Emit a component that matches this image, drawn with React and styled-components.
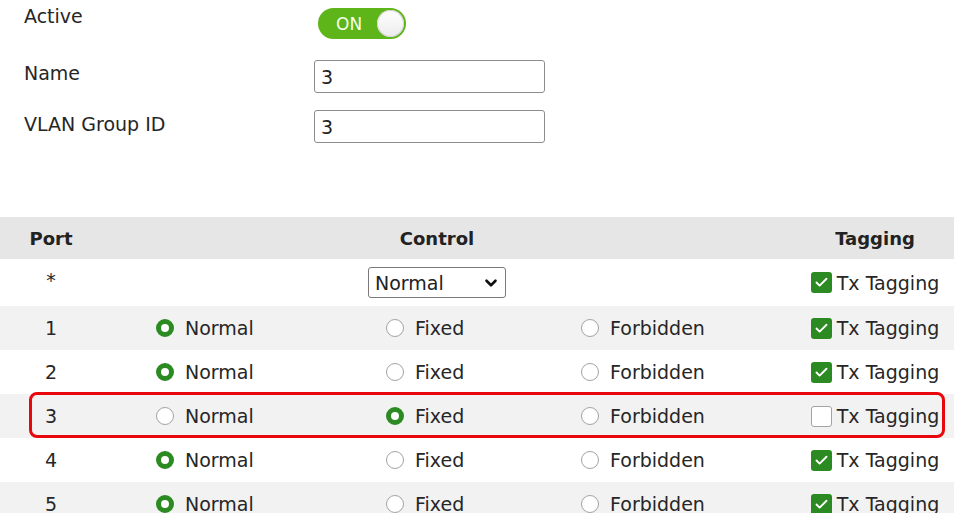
import React from "react";
import styled, { createGlobalStyle } from "styled-components";
import { ChevronDown, Check } from "lucide-react";

const GlobalStyle = createGlobalStyle`
  body {
    margin: 0;
    background: #ffffff;
    font-family: "DejaVu Sans", "Liberation Sans", sans-serif;
    color: #262626;
  }
`;

const Page = styled.div`
  width: 954px;
  height: 513px;
  overflow: hidden;
`;

const Form = styled.div`
  display: flex;
  flex-direction: column;
  padding: 8px 0 0 24px;
`;

const FormRow = styled.div`
  display: flex;
  align-items: flex-start;
  margin-top: ${({ $gap }) => $gap || 0}px;
`;

const Label = styled.div`
  width: 290px;
  font-size: 19px;
  line-height: 22px;
  margin-top: ${({ $offset }) => $offset}px;
`;

const Toggle = styled.div`
  display: flex;
  align-items: center;
  justify-content: space-between;
  box-sizing: border-box;
  width: 88px;
  height: 31px;
  margin-left: 4px;
  padding: 0 2px 0 18px;
  border-radius: 16px;
  background: #5db51a;
  color: #f6ffe8;
  font-size: 17px;
`;

const Knob = styled.span`
  width: 27px;
  height: 27px;
  border-radius: 50%;
  background: linear-gradient(#ffffff, #ececec);
  box-shadow: inset 0 0 0 1px #d4d4d4;
`;

const TextInput = styled.input`
  box-sizing: border-box;
  width: 231px;
  height: 33px;
  padding: 0 6px;
  border: 1px solid #8c8c8c;
  border-radius: 3px;
  font-family: inherit;
  font-size: 19px;
  color: #222;
  outline: none;
`;

const Table = styled.div`
  margin-top: 74px;
`;

const Row = styled.div`
  position: relative;
  display: grid;
  grid-template-columns: 102px 284px 195px 215px 1fr;
  align-items: center;
  height: ${({ $h }) => $h}px;
  background: ${({ $bg }) => $bg};
  font-size: 19px;

  ${({ $flag }) =>
    $flag &&
    `
    &::after {
      content: "";
      position: absolute;
      left: 29px;
      right: 9px;
      top: -2px;
      bottom: 0;
      border: 3px solid #e8070c;
      border-radius: 8px;
      pointer-events: none;
    }
  `}
`;

const HeadCell = styled.div`
  font-weight: bold;
  font-size: 18px;
  color: #222;
  text-align: center;
  grid-column: ${({ $span }) => $span || "auto"};
  padding-right: ${({ $pr }) => $pr || 0}px;
`;

const PortCell = styled.div`
  text-align: center;
  margin-top: ${({ $lift }) => ($lift ? -5 : 0)}px;
`;

const Cell = styled.div`
  display: flex;
  align-items: center;
  justify-content: ${({ $center }) => ($center ? "center" : "flex-start")};
  grid-column: ${({ $span }) => $span || "auto"};
  padding-left: ${({ $pl }) => $pl || 0}px;
  padding-right: ${({ $pr }) => $pr || 0}px;
`;

const SelectWrap = styled.div`
  position: relative;
  width: 138px;
  height: 31px;
`;

const Select = styled.select`
  appearance: none;
  box-sizing: border-box;
  width: 100%;
  height: 100%;
  padding: 0 0 0 6px;
  border: 1px solid #7a7a7a;
  border-radius: 3px;
  background: #fff;
  font-family: inherit;
  font-size: 19px;
  color: #222;
`;

const SelectArrow = styled(ChevronDown)`
  position: absolute;
  right: 6px;
  top: 7px;
  pointer-events: none;
`;

const Option = styled.label`
  display: flex;
  align-items: center;
  gap: 11px;
`;

const RadioDot = styled.span`
  box-sizing: border-box;
  width: 18px;
  height: 18px;
  border-radius: 50%;
  background: #fff;
  border: ${({ $on }) => ($on ? "5.5px solid #2b8a21" : "1.5px solid #a3a3a3")};
`;

const Box = styled.span`
  display: flex;
  align-items: center;
  justify-content: center;
  box-sizing: border-box;
  width: 21px;
  height: 21px;
  border-radius: 3px;
  background: ${({ $on }) => ($on ? "#2b8a21" : "#fff")};
  border: ${({ $on }) => ($on ? "none" : "1.5px solid #a3a3a3")};
`;

const TagOption = styled(Option)`
  gap: 5px;
`;

const Radio = ({ on, children }) => (
  <Option>
    <RadioDot $on={on} />
    {children}
  </Option>
);

const TxTagging = ({ on }) => (
  <TagOption>
    <Box $on={on}>{on && <Check size={15} strokeWidth={3} color="#fff" />}</Box>
    Tx Tagging
  </TagOption>
);

const ports = [
  { port: 1, control: "normal", tag: true },
  { port: 2, control: "normal", tag: true },
  { port: 3, control: "fixed", tag: false, flag: true },
  { port: 4, control: "normal", tag: true },
  { port: 5, control: "normal", tag: true },
];

export default function App() {
  return (
    <Page>
      <GlobalStyle />
      <Form>
        <FormRow>
          <Label $offset={-3}>Active</Label>
          <Toggle>
            ON
            <Knob />
          </Toggle>
        </FormRow>
        <FormRow $gap={21}>
          <Label $offset={2}>Name</Label>
          <TextInput defaultValue="3" />
        </FormRow>
        <FormRow $gap={17}>
          <Label $offset={3}>VLAN Group ID</Label>
          <TextInput defaultValue="3" />
        </FormRow>
      </Form>

      <Table>
        <Row $h={42} $bg="#e6e6e6">
          <HeadCell>Port</HeadCell>
          <HeadCell $span="2 / 5" $pr={24}>Control</HeadCell>
          <HeadCell>Tagging</HeadCell>
        </Row>
        <Row $h={47} $bg="#ffffff">
          <PortCell $lift>*</PortCell>
          <Cell $span="2 / 5" $pr={24} $center>
            <SelectWrap>
              <Select defaultValue="Normal">
                <option>Normal</option>
                <option>Fixed</option>
                <option>Forbidden</option>
              </Select>
              <SelectArrow size={18} strokeWidth={3.5} color="#111" />
            </SelectWrap>
          </Cell>
          <Cell $center>
            <TxTagging on />
          </Cell>
        </Row>
        {ports.map((p, i) => (
          <Row key={p.port} $h={44} $bg={i % 2 === 0 ? "#f2f2f2" : "#ffffff"} $flag={p.flag}>
            <PortCell>{p.port}</PortCell>
            <Cell $pl={54}>
              <Radio on={p.control === "normal"}>Normal</Radio>
            </Cell>
            <Cell>
              <Radio on={p.control === "fixed"}>Fixed</Radio>
            </Cell>
            <Cell>
              <Radio on={p.control === "forbidden"}>Forbidden</Radio>
            </Cell>
            <Cell $center>
              <TxTagging on={p.tag} />
            </Cell>
          </Row>
        ))}
      </Table>
    </Page>
  );
}
